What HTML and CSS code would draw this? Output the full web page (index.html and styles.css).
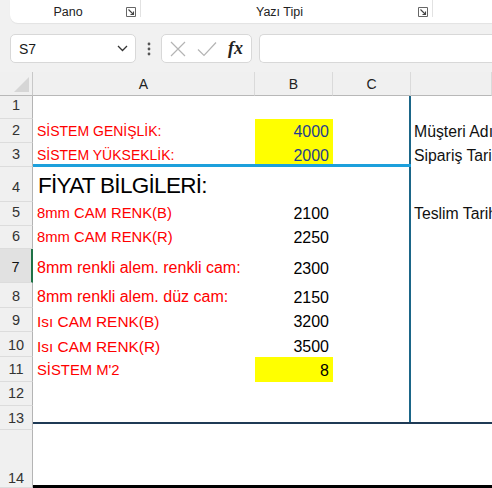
FILE: index.html
```html
<!DOCTYPE html>
<html lang="tr">
<head>
<meta charset="utf-8">
<title>Sheet</title>
<link rel="stylesheet" href="styles.css">
</head>
<body>
<div class="ribbon">
  <div class="group g-pano">
    <span class="glabel">Pano</span>
    <svg class="launcher" width="10" height="10" viewBox="0 0 10 10"><path d="M0.5 9.5V0.5h9v9z" fill="none" stroke="#666" stroke-width="1"/><path d="M2.5 2.5l5 5M7.5 4.5v3h-3" fill="none" stroke="#444" stroke-width="1.1"/></svg>
  </div>
  <div class="sep"></div>
  <div class="group g-font">
    <span class="glabel">Yazı Tipi</span>
    <svg class="launcher" width="10" height="10" viewBox="0 0 10 10"><path d="M0.5 9.5V0.5h9v9z" fill="none" stroke="#666" stroke-width="1"/><path d="M2.5 2.5l5 5M7.5 4.5v3h-3" fill="none" stroke="#444" stroke-width="1.1"/></svg>
  </div>
  <div class="sep"></div>
</div>

<div class="fbar">
  <div class="namebox">
    <span>S7</span>
    <svg width="11" height="7" viewBox="0 0 11 7"><path d="M1 1l4.5 4.5L10 1" fill="none" stroke="#333" stroke-width="1.3"/></svg>
  </div>
  <svg class="dots" width="4" height="14" viewBox="0 0 4 14"><circle cx="2" cy="2" r="1.4" fill="#555"/><circle cx="2" cy="7" r="1.4" fill="#555"/><circle cx="2" cy="12" r="1.4" fill="#555"/></svg>
  <div class="fxbox">
    <svg width="16" height="16" viewBox="0 0 16 16"><path d="M1 1l14 14M15 1L1 15" stroke="#b4b4b4" stroke-width="1.2"/></svg>
    <svg width="20" height="16" viewBox="0 0 20 16"><path d="M1 8.5l6 6L19 1.5" fill="none" stroke="#b4b4b4" stroke-width="1.2"/></svg>
    <span class="fx">fx</span>
  </div>
  <div class="finput"></div>
</div>

<div class="sheet">
  <div class="row hdr">
    <div class="corner"><span class="tri"></span></div>
    <div class="ch">A</div><div class="ch">B</div><div class="ch">C</div><div class="ch"></div>
  </div>
  <div class="row r1">
    <div class="rh">1</div><div class="c"></div><div class="c"></div><div class="c vr"></div><div class="c"></div>
  </div>
  <div class="row r2">
    <div class="rh">2</div><div class="c red up">SİSTEM GENİŞLİK:</div><div class="c num yel blue">4000</div><div class="c vr"></div><div class="c dtext">Müşteri Adı</div>
  </div>
  <div class="row r3">
    <div class="rh">3</div><div class="c red up bl">SİSTEM YÜKSEKLİK:</div><div class="c num yel blue bl">2000</div><div class="c vr bl"></div><div class="c dtext">Sipariş Tarihi</div>
  </div>
  <div class="row r4">
    <div class="rh">4</div><div class="c head">FİYAT BİLGİLERİ:</div><div class="c"></div><div class="c vr"></div><div class="c"></div>
  </div>
  <div class="row r5">
    <div class="rh">5</div><div class="c red mid">8mm CAM RENK(B)</div><div class="c num">2100</div><div class="c vr"></div><div class="c dtext">Teslim Tarihi</div>
  </div>
  <div class="row r6">
    <div class="rh">6</div><div class="c red mid">8mm CAM RENK(R)</div><div class="c num">2250</div><div class="c vr"></div><div class="c"></div>
  </div>
  <div class="row r7">
    <div class="rh sel">7</div><div class="c red big">8mm renkli alem. renkli cam:</div><div class="c num">2300</div><div class="c vr"></div><div class="c"></div>
  </div>
  <div class="row r8">
    <div class="rh">8</div><div class="c red big">8mm renkli alem. düz cam:</div><div class="c num">2150</div><div class="c vr"></div><div class="c"></div>
  </div>
  <div class="row r9">
    <div class="rh">9</div><div class="c red mid2">Isı CAM RENK(B)</div><div class="c num">3200</div><div class="c vr"></div><div class="c"></div>
  </div>
  <div class="row r10">
    <div class="rh">10</div><div class="c red mid2">Isı CAM RENK(R)</div><div class="c num">3500</div><div class="c vr"></div><div class="c"></div>
  </div>
  <div class="row r11">
    <div class="rh">11</div><div class="c red mid">SİSTEM M'2</div><div class="c num yel">8</div><div class="c vr"></div><div class="c"></div>
  </div>
  <div class="row r12">
    <div class="rh">12</div><div class="c"></div><div class="c"></div><div class="c vr"></div><div class="c"></div>
  </div>
  <div class="row r13">
    <div class="rh">13</div><div class="c dk"></div><div class="c dk"></div><div class="c dk vr13"></div><div class="c dk"></div>
  </div>
  <div class="row r14">
    <div class="rh">14</div><div class="c bb"></div><div class="c bb"></div><div class="c bb"></div><div class="c bb"></div>
  </div>
</div>
</body>
</html>
```

FILE: styles.css
```css
* { box-sizing: border-box; }
html, body { margin: 0; padding: 0; }
body {
  width: 492px;
  height: 488px;
  overflow: hidden;
  background: #f1f1f1;
  font-family: "Liberation Sans", Arial, sans-serif;
  color: #222;
}

/* ribbon */
.ribbon {
  margin-left: 10px;
  height: 23px;
  background: #fff;
  border-bottom-left-radius: 8px;
  box-shadow: 0 1px 1px rgba(0,0,0,0.06);
  display: flex;
  align-items: center;
  font-size: 12.5px;
  color: #222;
}
.group { display: flex; align-items: center; height: 100%; }
.g-pano { width: 130px; }
.g-font { width: 291px; }
.glabel { flex: 1; text-align: center; padding-top: 1px; }
.launcher { margin: 1px 4px 0 0; flex: none; }
.sep { width: 1px; height: 17px; background: #e2e2e2; align-self: flex-start; }

/* formula bar */
.fbar {
  display: flex;
  align-items: flex-start;
  padding: 11px 0 0 10px;
  height: 49px;
}
.namebox {
  width: 126px;
  height: 29px;
  background: #fff;
  border: 1px solid #d8d8d8;
  border-radius: 5px;
  display: flex;
  align-items: center;
  justify-content: space-between;
  padding: 0 7px 0 8px;
  font-size: 14px;
  color: #1a1a1a;
}
.dots { margin: 8px 10px 0 11px; }
.fxbox {
  width: 91px;
  height: 29px;
  background: #fff;
  border: 1px solid #d8d8d8;
  border-radius: 5px;
  display: flex;
  align-items: center;
  padding: 0 6px 0 8px;
  gap: 11px;
}
.fx {
  font-family: "Liberation Serif", "Times New Roman", serif;
  font-style: italic;
  font-weight: bold;
  font-size: 18px;
  color: #222;
}
.finput {
  margin-left: 7px;
  flex: 1;
  height: 29px;
  background: #fff;
  border: 1px solid #d8d8d8;
  border-right: none;
  border-radius: 5px 0 0 5px;
}

/* sheet */
.sheet { background: #fff; }
.row {
  display: grid;
  grid-template-columns: 33px 222px 78px 78px 81px;
  --pb: 3px;
}
.hdr { height: 24px; background: #f0f0f0; }
.corner {
  position: relative;
  background: #f0f0f0;
  border-right: 1px solid #c8c8c8;
  border-bottom: 1px solid #b8b8b8;
}
.tri {
  position: absolute;
  right: 3px;
  bottom: 3px;
  width: 0;
  height: 0;
  border-left: 15px solid transparent;
  border-bottom: 15px solid #d6d6d6;
}
.ch {
  background: #f0f0f0;
  border-right: 1px solid #dadada;
  border-bottom: 1px solid #b8b8b8;
  display: flex;
  align-items: center;
  justify-content: center;
  font-size: 14px;
  color: #222;
}
.rh {
  background: #f0f0f0;
  border-right: 1px solid #b4b4b4;
  border-bottom: 1px solid #dcdcdc;
  display: flex;
  align-items: flex-end;
  justify-content: center;
  padding-bottom: var(--pb);
  font-size: 14.5px;
  line-height: 17px;
  color: #333;
}
.rh.sel {
  background: #e1e1e1;
  border-right: 2px solid #1e7145;
  color: #111;
}
.c {
  display: flex;
  align-items: flex-end;
  padding: 0 4px var(--pb) 4px;
  white-space: nowrap;
  font-size: 14px;
  line-height: 17px;
  color: #000;
}
.red { color: #ff0000; }
.up { font-size: 14px; }
.mid { font-size: 14.8px; }
.mid2 { font-size: 15.4px; }
.big { font-size: 16px; line-height: 19px; }
.head {
  font-size: 22.5px;
  line-height: 25px;
  letter-spacing: -0.7px;
  padding-left: 5px;
  color: #000;
}
.num { justify-content: flex-end; font-size: 16px; padding-right: 4px; }
.yel { background: #ffff00; }
.blue { color: #1f3d8f; }
.dtext { font-size: 15.8px; padding-left: 3px; color: #111; }
.vr { box-shadow: inset -2px 0 0 #1b6688; }
.bl { box-shadow: inset 0 -3px 0 #1da0dc; }
.vr.bl { box-shadow: inset 0 -3px 0 #1da0dc, inset -2px 0 0 #1b6688; }
.dk {
  background-image: linear-gradient(to bottom, transparent 16px, #1f3a55 16px, #1f3a55 18px, transparent 18px);
}
.vr13 {
  background-image:
    linear-gradient(to bottom, transparent 16px, #1f3a55 16px, #1f3a55 18px, transparent 18px),
    linear-gradient(to left, #1b6688 2px, transparent 2px);
  background-size: 100% 100%, 100% 17px;
  background-repeat: no-repeat;
}
.bb { border-bottom: 3px solid #000; }

.r1 { height: 23px; --pb: 4px; }
.r2 { height: 24px; --pb: 3px; }
.r3 { height: 24px; --pb: 3px; }
.r4 { height: 35px; --pb: 5px; }
.r4 .head { padding-bottom: 4px; }
.r5 { height: 24px; --pb: 4px; }
.r6 { height: 23px; --pb: 3px; }
.r7 { height: 34px; --pb: 6px; }
.r8 { height: 25px; --pb: 2px; }
.r9 { height: 24px; --pb: 2px; }
.r10 { height: 25px; --pb: 2px; }
.r11 { height: 25px; --pb: 3px; }
.r12 { height: 24px; --pb: 3px; }
.r13 { height: 24px; --pb: 2px; }
.r14 { height: 58px; --pb: 0px; }
.r14 .rh { padding-bottom: 0; }
```
